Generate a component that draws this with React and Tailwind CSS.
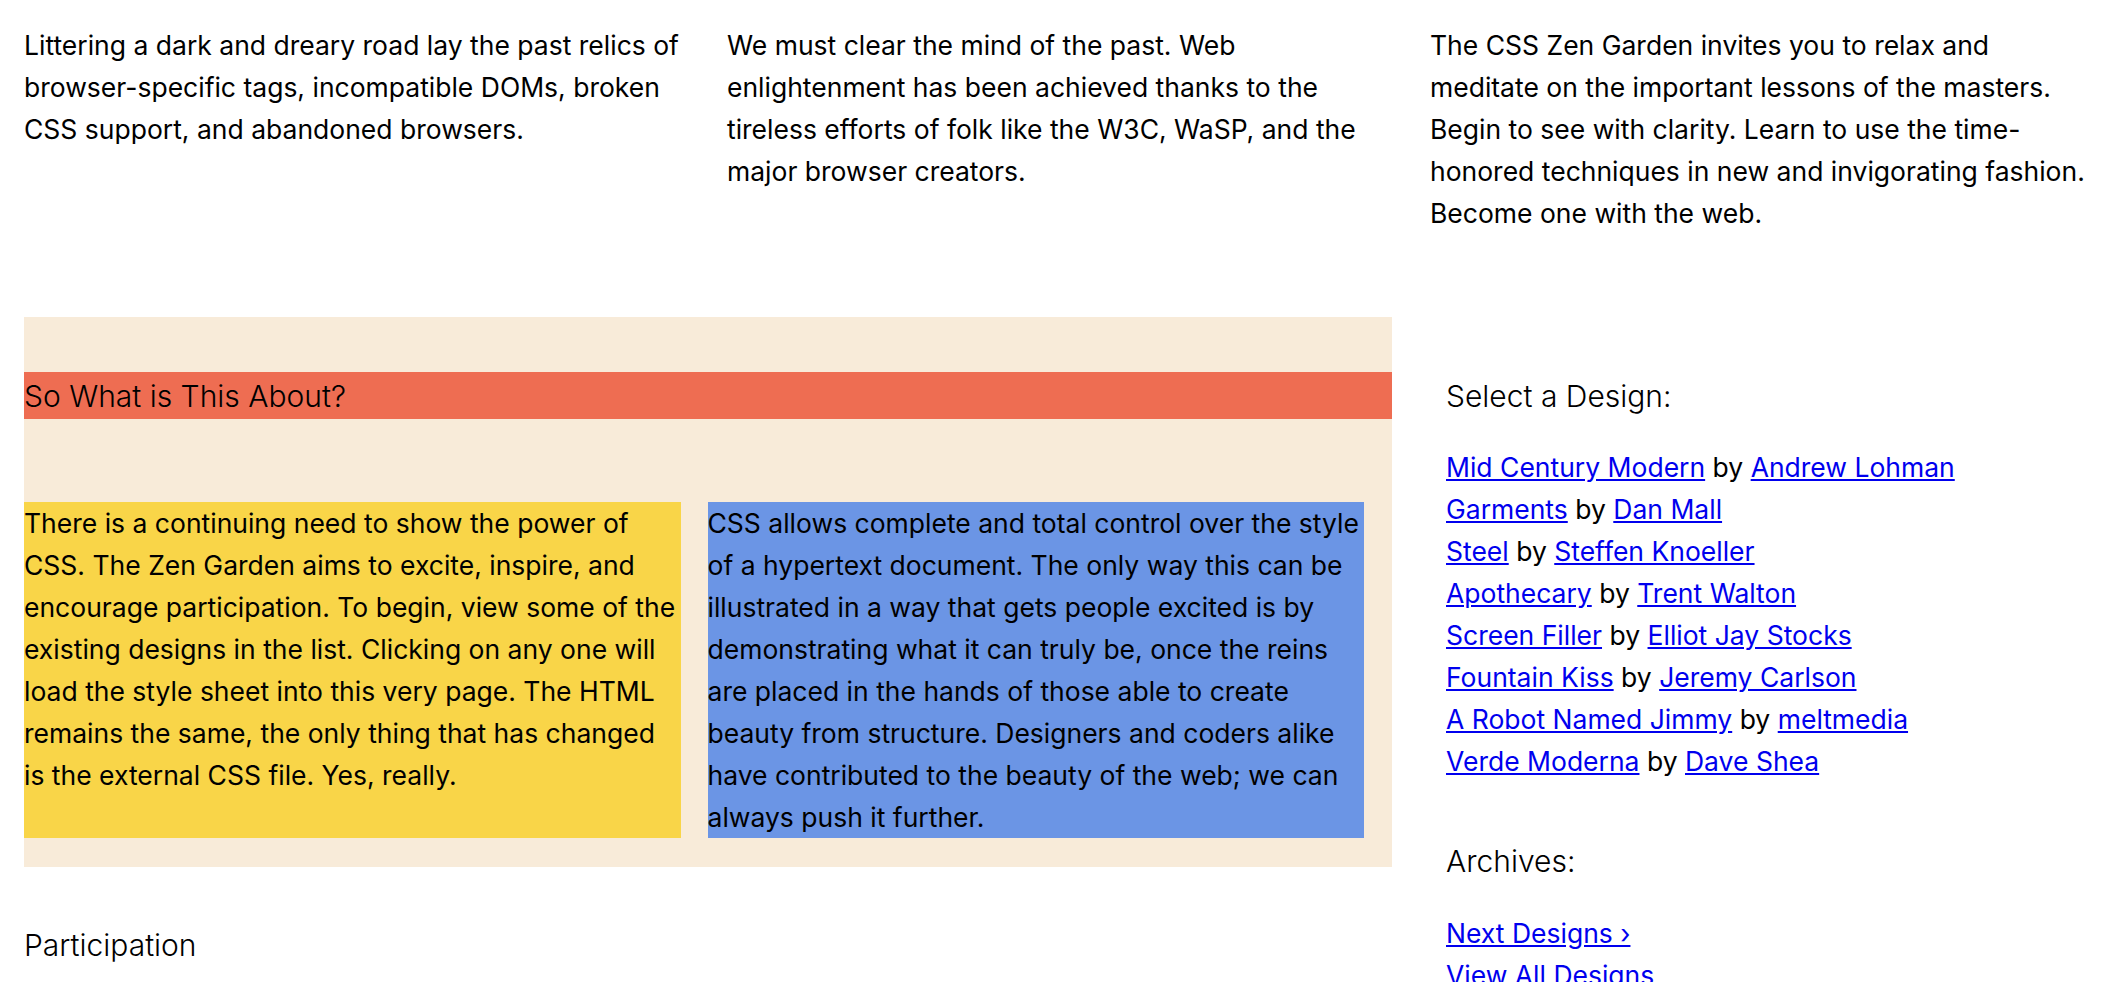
const designs = [
  ['Mid Century Modern', 'Andrew Lohman'],
  ['Garments', 'Dan Mall'],
  ['Steel', 'Steffen Knoeller'],
  ['Apothecary', 'Trent Walton'],
  ['Screen Filler', 'Elliot Jay Stocks'],
  ['Fountain Kiss', 'Jeremy Carlson'],
  ['A Robot Named Jimmy', 'meltmedia'],
  ['Verde Moderna', 'Dave Shea'],
];

const intro = [
  'Littering a dark and dreary road lay the past relics of browser-specific tags, incompatible DOMs, broken CSS support, and abandoned browsers.',
  'We must clear the mind of the past. Web enlightenment has been achieved thanks to the tireless efforts of folk like the W3C, WaSP, and the major browser creators.',
  'The CSS Zen Garden invites you to relax and meditate on the important lessons of the masters. Begin to see with clarity. Learn to use the time-honored techniques in new and invigorating fashion. Become one with the web.',
];

export default function App() {
  return (
    <div className="min-h-screen bg-white text-black pl-6 pr-[13px] pt-[24px] font-['Inter',sans-serif] text-[26.5px] leading-[42px]">
      {/* intro */}
      <div className="grid grid-cols-[657px_657px_657px] gap-[46px]">
        {intro.map((t, i) => (
          <p key={i}>{t}</p>
        ))}
      </div>

      <div className="flex items-start mt-[83px]">
        <div className="w-[1368px] shrink-0">
          <section className="bg-[#f8ebd9] pt-[55px] pb-[29px] pr-[28px]">
            <h3 className="-mr-[28px] bg-[#ee6d52] h-[47px] flex items-center text-[30px] font-light">
              So What is This About?
            </h3>
            <div className="grid grid-cols-2 gap-[27px] mt-[83px]">
              <p className="bg-[#f9d548]">
                There is a continuing need to show the power of CSS. The Zen Garden aims to excite, inspire, and encourage participation. To begin, view some of the existing designs in the list. Clicking on any one will load the style sheet into this very page. The HTML remains the same, the only thing that has changed is the external CSS file. Yes, really.
              </p>
              <p className="bg-[#6b95e5]">
                CSS allows complete and total control over the style of a hypertext document. The only way this can be illustrated in a way that gets people excited is by demonstrating what it can truly be, once the reins are placed in the hands of those able to create beauty from structure. Designers and coders alike have contributed to the beauty of the web; we can always push it further.
              </p>
            </div>
          </section>
          <h3 className="mt-[57px] text-[30px] font-light">Participation</h3>
        </div>

        <aside className="ml-[54px] pt-[58px]">
          <h3 className="text-[30px] font-light">Select a Design:</h3>
          <ul className="mt-[29px]">
            {designs.map(([name, author]) => (
              <li key={name}>
                <a href="#" className="text-[#0000ee] underline">{name}</a> by{' '}
                <a href="#" className="text-[#0000ee] underline">{author}</a>
              </li>
            ))}
          </ul>
          <h3 className="mt-[58px] text-[30px] font-light">Archives:</h3>
          <ul className="mt-[30px]">
            <li><a href="#" className="text-[#0000ee] underline">Next Designs ›</a></li>
            <li><a href="#" className="text-[#0000ee] underline">View All Designs</a></li>
          </ul>
        </aside>
      </div>
    </div>
  );
}
